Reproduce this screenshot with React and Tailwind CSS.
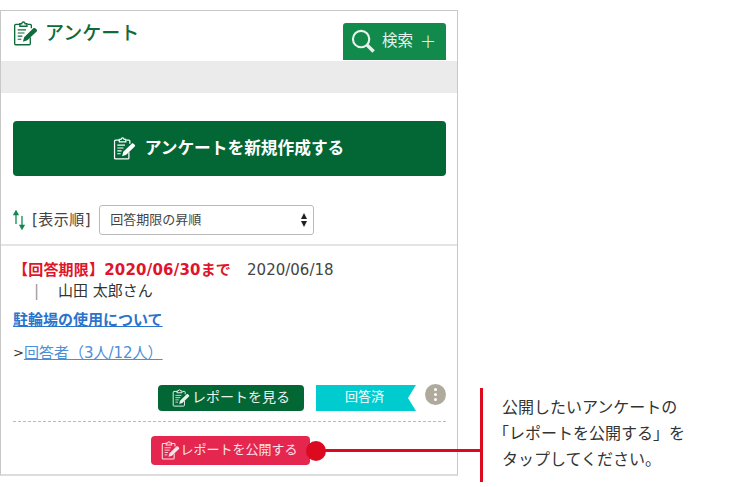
function ClipboardIcon({ className }) {
  return (
    <svg className={className} viewBox="0 0 24 24" fill="none" stroke="currentColor" strokeWidth="1.3">
      <path d="M7 3.200H2.600c-.6 0-1 .4-1 1v17.600c0 .6.4 1 1 1h13c.6 0 1-.4 1-1v-6" />
      <path d="M14 3.200h2.600c.6 0 1 .4 1 1v2.800" />
      <path d="M6.600 5V2.600h1.800c.2-1 .8-1.600 1.600-1.600s1.400.6 1.600 1.600h1.800V5z" />
      <path d="M4.500 8.500h8M4.500 11.500h6.500M4.500 14.500h4.500M4.500 17.500h3.500" strokeWidth="1.100" />
      <path d="M9.500 20l1.200-4.500L19.500 7c.5-.5 1.300-.5 1.800 0l1.400 1.200c.5.5.5 1.300 0 1.800L13.800 18.500z" fill="currentColor" stroke="none" />
    </svg>
  );
}

function SearchIcon() {
  return (
    <svg className="h-[25px] w-[25px]" viewBox="0 0 26 26" fill="none" stroke="currentColor">
      <circle cx="10.500" cy="10.500" r="8.500" strokeWidth="2.200" />
      <path d="M16.500 16.500l7 7" strokeWidth="3.600" />
    </svg>
  );
}

function SortIcon() {
  return (
    <svg className="h-[20px] w-[12px]" viewBox="0 0 12 20" fill="none" stroke="#12894c" strokeWidth="1.300">
      <path d="M3 14V3" />
      <path d="M1 4.500L3 1l2 3.500z" fill="#12894c" />
      <path d="M9 6v11" />
      <path d="M7 15.500L9 19l2-3.500z" fill="#12894c" />
    </svg>
  );
}

export default function App() {
  return (
    <div className="relative h-[487px] w-[750px] overflow-hidden bg-white font-['DejaVu_Sans','Noto_Sans_CJK_JP',sans-serif] text-[#333]">
      <div className="mt-[10px] h-[466px] w-[458px] border border-b-2 border-[#c8c8c8] border-b-[#dcdcdc]">
        <div className="flex h-[50px] justify-between pl-3 pr-[11px]">
          <div className="flex h-[44px] items-center gap-[7px] text-[#0f6b3c]">
            <ClipboardIcon className="h-[25px] w-[25px]" />
            <span className="text-[19px] font-medium leading-none">アンケート</span>
          </div>
          <div className="mt-3 flex h-[37px] w-[103px] items-center gap-[6px] rounded-t-[3px] bg-[#128a4c] pl-[8px] text-[#e6f3ec]">
            <SearchIcon />
            <span className="text-[15.5px] leading-none">検索</span>
            <span className="ml-[1px] text-[19px] font-extralight leading-none">+</span>
          </div>
        </div>
        <div className="h-[32px] bg-[#ebebeb]" />

        <div className="pl-3 pr-[11px] pt-[28px]">
          <div className="flex h-[55px] items-center justify-center gap-[9px] rounded-[4px] bg-[#026635] pr-[2px] text-white">
            <ClipboardIcon className="h-[23px] w-[23px]" />
            <span className="text-[16.7px] font-bold leading-none">アンケートを新規作成する</span>
          </div>
          <div className="mt-[29px] flex h-[30px] items-center">
            <SortIcon />
            <span className="ml-[7px] text-[15px] leading-none tracking-[0.5px] text-[#444]">[表示順]</span>
            <div className="ml-[8px] flex h-[30px] w-[215px] items-center justify-between rounded-[3px] border border-[#bbb] pl-[10px] pr-[6px]">
              <span className="pb-[2px] text-[13px] leading-none text-[#444]">回答期限の昇順</span>
              <div className="flex flex-col gap-[2px]">
                <div className="h-0 w-0 border-x-[3.500px] border-b-[6px] border-x-transparent border-b-[#222]" />
                <div className="h-0 w-0 border-x-[3.500px] border-t-[6px] border-x-transparent border-t-[#222]" />
              </div>
            </div>
          </div>
        </div>

        <div className="mt-[9px] h-[2px] bg-[#e4e4e4]" />

        <div className="pl-3 pr-[11px]">
          <div className="mt-[14px] flex h-[20px] items-center text-[15px] leading-none">
            <span className="font-bold tracking-[0.2px] text-[#e0142a]">【回答期限】2020/06/30まで</span>
            <span className="ml-[16px] text-[#444]">2020/06/18</span>
          </div>
          <div className="mt-[1px] flex h-[20px] items-center text-[15px] leading-none text-[#333]">
            <span className="ml-[21px] text-[#999]">|</span>
            <span className="ml-[19px]">山田 太郎さん</span>
          </div>
          <div className="mt-[9px] text-[15px] font-bold leading-[20px] text-[#2a74cc] underline">駐輪場の使用について</div>
          <div className="mt-[13px] flex text-[15px] leading-[20px]">
            <span className="text-[13px]">&gt;</span>
            <span className="text-[#4a90d9] underline">回答者（3人/12人）</span>
          </div>

          <div className="mt-[22px] flex h-[26px] items-center">
            <div className="ml-[145px] flex h-[26px] w-[146px] items-center justify-center gap-[2px] rounded-[4px] bg-[#026635] text-[#e8f2ec]">
              <ClipboardIcon className="h-[18px] w-[18px]" />
              <span className="pb-[2px] text-[14px] leading-none">レポートを見る</span>
            </div>
            <div className="ml-3 flex h-[26px] w-[100px] items-center justify-center bg-[#00ccd0] pb-[3px] pr-[3px] text-[13px] leading-none text-white [clip-path:polygon(0_0,100%_0,92%_50%,100%_100%,0_100%)]">
              回答済
            </div>
            <div className="mb-[7px] ml-[9px] flex h-[21px] w-[21px] flex-col items-center justify-center gap-[2px] rounded-full bg-[#b0aa9c]">
              <span className="h-[3px] w-[3px] rounded-full bg-white" />
              <span className="h-[3px] w-[3px] rounded-full bg-white" />
              <span className="h-[3px] w-[3px] rounded-full bg-white" />
            </div>
          </div>

          <div className="mt-[10px] border-t border-dashed border-[#bbb]" />

          <div className="mt-[14px] flex justify-center pl-[2px]">
            <div className="flex h-[29px] w-[159px] items-center justify-center rounded-[4px] bg-[#e5264f] pr-[2px] text-[#fbe3e8]">
              <ClipboardIcon className="h-[19px] w-[19px]" />
              <span className="pb-[2px] text-[13px] leading-none">レポートを公開する</span>
            </div>
          </div>
        </div>
      </div>

      {/* annotation over the panel */}
      <div className="absolute left-[306px] top-[441px] h-[20px] w-[20px] rounded-full bg-[#dc0a1e]" />
      <div className="absolute left-[320px] top-[449px] h-[3px] w-[160px] bg-[#dc0a1e]" />
      <div className="absolute left-[480px] top-[388px] h-[94px] w-[3px] bg-[#dc0a1e]" />
      <div className="absolute left-[493px] top-[395px] text-[16px] leading-[26px] text-[#333]">
        <p className="pl-[9px]">公開したいアンケートの</p>
        <p>「レポートを公開する」を</p>
        <p className="pl-[9px]">タップしてください。</p>
      </div>
    </div>
  );
}
